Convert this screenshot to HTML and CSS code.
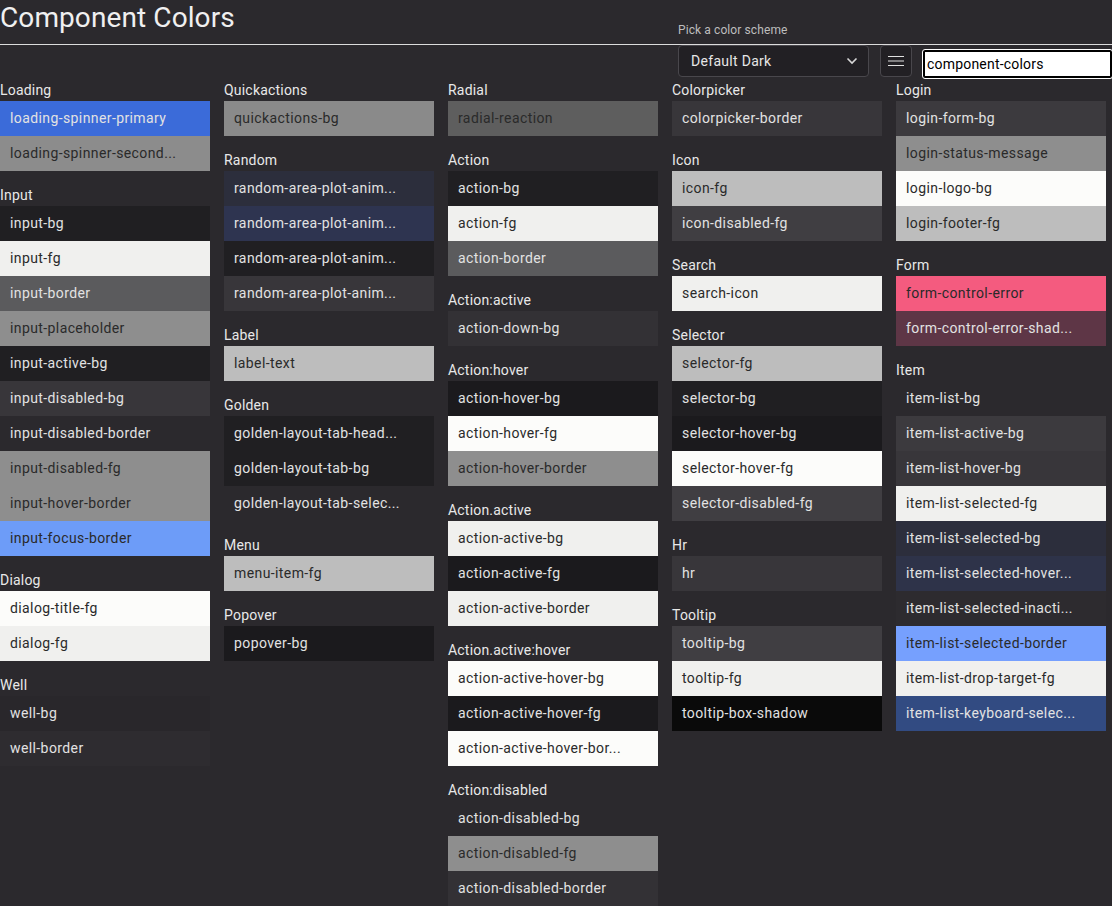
FILE: index.html
```html
<!DOCTYPE html>
<html lang="en">
<head>
<meta charset="utf-8">
<title>Component Colors</title>
<link rel="stylesheet" href="styles.css">
</head>
<body>
<header class="top">
  <h1 class="title">Component Colors</h1>
  <div class="controls">
    <div class="scheme">
      <span class="scheme-label">Pick a color scheme</span>
      <div class="select">
        <span>Default Dark</span>
        <svg class="chev" width="12" height="8" viewBox="0 0 12 8"><path d="M1.5 1.5 L6 6 L10.5 1.5" fill="none" stroke="#d8d8d8" stroke-width="1.6"/></svg>
      </div>
    </div>
    <button class="menu-btn" type="button">
      <svg width="16" height="12" viewBox="0 0 16 12"><path d="M0 1.5 H16 M0 6 H16 M0 10.5 H16" stroke="#e0e0e0" stroke-width="1.2"/></svg>
    </button>
    <input class="filter" type="text" value="component-colors">
  </div>
</header>
<hr class="rule">
<main class="grid">
  <div class="col">
    <section class="group">
      <h2 class="gh">Loading</h2>
      <div class="sw lt" style="background:#3b6bd9">loading-spinner-primary</div>
      <div class="sw dk" style="background:#8c8c8c">loading-spinner-second...</div>
    </section>
    <section class="group">
      <h2 class="gh">Input</h2>
      <div class="sw lt" style="background:#201f22">input-bg</div>
      <div class="sw dk" style="background:#f0f0ee">input-fg</div>
      <div class="sw lt" style="background:#5b5b5d">input-border</div>
      <div class="sw dk" style="background:#8e8e8e">input-placeholder</div>
      <div class="sw lt" style="background:#201f22">input-active-bg</div>
      <div class="sw lt" style="background:#38363a">input-disabled-bg</div>
      <div class="sw lt" style="background:#2b292d">input-disabled-border</div>
      <div class="sw dk" style="background:#8e8e8e">input-disabled-fg</div>
      <div class="sw dk" style="background:#8e8e8e">input-hover-border</div>
      <div class="sw dk" style="background:#6d9cf8">input-focus-border</div>
    </section>
    <section class="group">
      <h2 class="gh">Dialog</h2>
      <div class="sw dk" style="background:#fcfcfa">dialog-title-fg</div>
      <div class="sw dk" style="background:#f0f0ee">dialog-fg</div>
    </section>
    <section class="group">
      <h2 class="gh">Well</h2>
      <div class="sw lt" style="background:#29272b">well-bg</div>
      <div class="sw lt" style="background:#2e2c30">well-border</div>
    </section>
  </div>

  <div class="col">
    <section class="group">
      <h2 class="gh">Quickactions</h2>
      <div class="sw dk" style="background:#8a8a8a">quickactions-bg</div>
    </section>
    <section class="group">
      <h2 class="gh">Random</h2>
      <div class="sw lt" style="background:#2c2e3c">random-area-plot-anim...</div>
      <div class="sw lt" style="background:#2e3450">random-area-plot-anim...</div>
      <div class="sw lt" style="background:#201f22">random-area-plot-anim...</div>
      <div class="sw lt" style="background:#38363a">random-area-plot-anim...</div>
    </section>
    <section class="group">
      <h2 class="gh">Label</h2>
      <div class="sw dk" style="background:#bdbdbd">label-text</div>
    </section>
    <section class="group">
      <h2 class="gh">Golden</h2>
      <div class="sw lt" style="background:#201f22">golden-layout-tab-head...</div>
      <div class="sw lt" style="background:#201f22">golden-layout-tab-bg</div>
      <div class="sw lt" style="background:#2b292d">golden-layout-tab-selec...</div>
    </section>
    <section class="group">
      <h2 class="gh">Menu</h2>
      <div class="sw dk" style="background:#bdbdbd">menu-item-fg</div>
    </section>
    <section class="group">
      <h2 class="gh">Popover</h2>
      <div class="sw lt" style="background:#1b1a1d">popover-bg</div>
    </section>
  </div>

  <div class="col">
    <section class="group">
      <h2 class="gh">Radial</h2>
      <div class="sw dk" style="background:#5e5e5e">radial-reaction</div>
    </section>
    <section class="group">
      <h2 class="gh">Action</h2>
      <div class="sw lt" style="background:#201f22">action-bg</div>
      <div class="sw dk" style="background:#f0f0ee">action-fg</div>
      <div class="sw lt" style="background:#5b5b5d">action-border</div>
    </section>
    <section class="group">
      <h2 class="gh">Action:active</h2>
      <div class="sw lt" style="background:#333135">action-down-bg</div>
    </section>
    <section class="group">
      <h2 class="gh">Action:hover</h2>
      <div class="sw lt" style="background:#1b1a1d">action-hover-bg</div>
      <div class="sw dk" style="background:#fcfcfa">action-hover-fg</div>
      <div class="sw dk" style="background:#8e8e8e">action-hover-border</div>
    </section>
    <section class="group">
      <h2 class="gh">Action.active</h2>
      <div class="sw dk" style="background:#f0f0ee">action-active-bg</div>
      <div class="sw lt" style="background:#1b1a1d">action-active-fg</div>
      <div class="sw dk" style="background:#f0f0ee">action-active-border</div>
    </section>
    <section class="group">
      <h2 class="gh">Action.active:hover</h2>
      <div class="sw dk" style="background:#fcfcfa">action-active-hover-bg</div>
      <div class="sw lt" style="background:#1b1a1d">action-active-hover-fg</div>
      <div class="sw dk" style="background:#fcfcfa">action-active-hover-bor...</div>
    </section>
    <section class="group">
      <h2 class="gh">Action:disabled</h2>
      <div class="sw lt" style="background:#2b292d">action-disabled-bg</div>
      <div class="sw dk" style="background:#8e8e8e">action-disabled-fg</div>
      <div class="sw lt" style="background:#333135">action-disabled-border</div>
    </section>
  </div>

  <div class="col">
    <section class="group">
      <h2 class="gh">Colorpicker</h2>
      <div class="sw lt" style="background:#38363a">colorpicker-border</div>
    </section>
    <section class="group">
      <h2 class="gh">Icon</h2>
      <div class="sw dk" style="background:#bdbdbd">icon-fg</div>
      <div class="sw lt" style="background:#403e42">icon-disabled-fg</div>
    </section>
    <section class="group">
      <h2 class="gh">Search</h2>
      <div class="sw dk" style="background:#f0f0ee">search-icon</div>
    </section>
    <section class="group">
      <h2 class="gh">Selector</h2>
      <div class="sw dk" style="background:#bdbdbd">selector-fg</div>
      <div class="sw lt" style="background:#201f22">selector-bg</div>
      <div class="sw lt" style="background:#1b1a1d">selector-hover-bg</div>
      <div class="sw dk" style="background:#fcfcfa">selector-hover-fg</div>
      <div class="sw lt" style="background:#403e42">selector-disabled-fg</div>
    </section>
    <section class="group">
      <h2 class="gh">Hr</h2>
      <div class="sw lt" style="background:#38363a">hr</div>
    </section>
    <section class="group">
      <h2 class="gh">Tooltip</h2>
      <div class="sw lt" style="background:#403e42">tooltip-bg</div>
      <div class="sw dk" style="background:#f0f0ee">tooltip-fg</div>
      <div class="sw lt" style="background:#0a0a0a">tooltip-box-shadow</div>
    </section>
  </div>

  <div class="col">
    <section class="group">
      <h2 class="gh">Login</h2>
      <div class="sw lt" style="background:#3c3a3e">login-form-bg</div>
      <div class="sw dk" style="background:#8e8e8e">login-status-message</div>
      <div class="sw dk" style="background:#fcfcfa">login-logo-bg</div>
      <div class="sw dk" style="background:#bdbdbd">login-footer-fg</div>
    </section>
    <section class="group">
      <h2 class="gh">Form</h2>
      <div class="sw dk" style="background:#f45b7f">form-control-error</div>
      <div class="sw lt" style="background:#5e3646">form-control-error-shad...</div>
    </section>
    <section class="group">
      <h2 class="gh">Item</h2>
      <div class="sw lt" style="background:#2b292d">item-list-bg</div>
      <div class="sw lt" style="background:#3c3a3e">item-list-active-bg</div>
      <div class="sw lt" style="background:#38363a">item-list-hover-bg</div>
      <div class="sw dk" style="background:#f0f0ee">item-list-selected-fg</div>
      <div class="sw lt" style="background:#2c2e3c">item-list-selected-bg</div>
      <div class="sw lt" style="background:#2e3349">item-list-selected-hover...</div>
      <div class="sw lt" style="background:#2d2b2f">item-list-selected-inacti...</div>
      <div class="sw dk" style="background:#76a0fe">item-list-selected-border</div>
      <div class="sw dk" style="background:#f0f0ee">item-list-drop-target-fg</div>
      <div class="sw lt" style="background:#324b82">item-list-keyboard-selec...</div>
    </section>
  </div>
</main>
</body>
</html>
```

FILE: styles.css
```css
html, body {
  margin: 0;
  padding: 0;
  background: #2b292d;
  color: #e6e6e6;
  font-family: Roboto, "Noto Sans", "Liberation Sans", sans-serif;
}

.top {
  position: relative;
  height: 44px;
}

.title {
  margin: 0;
  font-size: 28px;
  font-weight: 400;
  line-height: 35px;
  color: #f0f0f0;
  letter-spacing: 0.1px;
}

.controls {
  position: absolute;
  top: 21px;
  left: 678px;
  right: 0;
  display: flex;
  align-items: flex-end;
  gap: 11px;
}

.scheme {
  display: flex;
  flex-direction: column;
  gap: 6px;
}

.scheme-label {
  font-size: 12px;
  line-height: 18px;
  color: #bdbdbd;
  letter-spacing: 0.1px;
}

.select {
  box-sizing: border-box;
  width: 191px;
  height: 32px;
  border: 1px solid #49474c;
  border-radius: 4px;
  background: #222024;
  display: flex;
  align-items: center;
  justify-content: space-between;
  padding: 0 10px 0 12px;
  font-size: 14px;
  letter-spacing: 0.3px;
  color: #e6e6e6;
}

.chev {
  display: block;
}

.menu-btn {
  box-sizing: border-box;
  width: 32px;
  height: 32px;
  border: 1px solid #49474c;
  border-radius: 4px;
  background: #222024;
  padding: 0;
  display: flex;
  align-items: center;
  justify-content: center;
}

.filter {
  box-sizing: border-box;
  flex: 1;
  min-width: 0;
  height: 28px;
  margin-bottom: -1px;
  border: 2px solid #000;
  outline: 1px solid #fff;
  border-radius: 2px;
  background: #fff;
  color: #000;
  font-family: Roboto, "Noto Sans", "Liberation Sans", sans-serif;
  font-size: 14px;
  letter-spacing: 0.2px;
  padding: 0 2px;
}

.rule {
  margin: 0;
  border: 0;
  border-top: 1px solid #dcdcdc;
  height: 0;
}

.grid {
  display: flex;
  gap: 14px;
  padding-top: 35px;
}

.col {
  width: 210px;
  display: flex;
  flex-direction: column;
  gap: 14px;
}

.group {
  display: flex;
  flex-direction: column;
}

.gh {
  margin: 0;
  font-size: 14px;
  font-weight: 400;
  line-height: 21px;
  letter-spacing: 0.2px;
  color: #e8e8e8;
}

.sw {
  height: 35px;
  line-height: 35px;
  padding: 0 10px;
  font-size: 14px;
  letter-spacing: 0.4px;
  white-space: nowrap;
  overflow: hidden;
  text-overflow: ellipsis;
}

.lt { color: #e2e2e2; }
.dk { color: #2a2a2a; }
```
